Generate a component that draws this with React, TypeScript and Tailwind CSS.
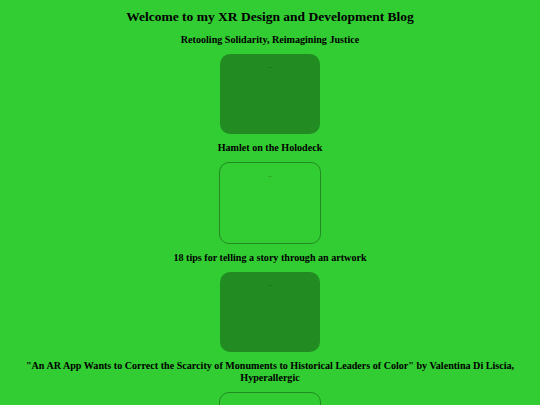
export default function App() {
  const posts = [
    { title: "Retooling Solidarity, Reimagining Justice", filled: true },
    { title: "Hamlet on the Holodeck", filled: false },
    { title: "18 tips for telling a story through an artwork", filled: true },
    {
      title:
        '"An AR App Wants to Correct the Scarcity of Monuments to Historical Leaders of Color" by Valentina Di Liscia, Hyperallergic',
      filled: false,
    },
  ];
  return (
    <div
      className="min-h-[405px] bg-[#32CD32] text-black text-center px-2 pt-[7px] pb-4"
      style={{ fontFamily: '"Liberation Serif", "Times New Roman", serif' }}
    >
      <h1 className="text-[13.5px] leading-[19px] font-bold">
        Welcome to my XR Design and Development Blog
      </h1>
      {posts.map((p) => (
        <div key={p.title} className="flex flex-col items-center">
          <h2 className="text-[10.1px] leading-[12px] font-bold mt-[8px] mb-[8px]">{p.title}</h2>
          <div
            className={
              p.filled
                ? "w-[100px] h-[80px] rounded-[10px] bg-[#228B22] flex justify-center pt-[11px]"
                : "w-[102px] h-[82px] rounded-[10px] border border-[#228B22] flex justify-center pt-[11px]"
            }
          >
            <span className="text-[4px] leading-none text-[#0b3d0b]">—</span>
          </div>
        </div>
      ))}
    </div>
  );
}
